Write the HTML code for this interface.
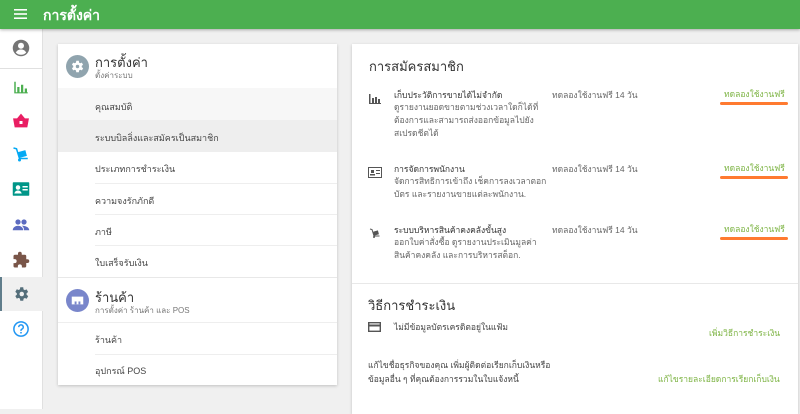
<!DOCTYPE html>
<html><head><meta charset="utf-8"><style>
*{margin:0;padding:0;box-sizing:border-box}
body{width:800px;height:409px;overflow:hidden;background:#f0f0f0;font-family:"Liberation Sans","Noto Sans CJK SC",sans-serif;color:#333;position:relative}
.hdr{position:absolute;left:0;top:0;width:800px;height:29px;background:#4caf50;box-shadow:0 1px 3px rgba(0,0,0,.3);z-index:2}
.hdr .t{position:absolute;left:43px;top:5px;color:#fff;font-size:14px;font-weight:bold}
.side{position:absolute;left:0;top:29px;width:43px;height:380px;background:#fff;border-right:1px solid #e0e0e0}
.ic{position:absolute;left:12px;width:18px;height:18px}
.card{position:absolute;background:#fff;box-shadow:0 1px 3px rgba(0,0,0,.2)}
.it{position:absolute;left:37px;font-size:9px;color:#444}
.sep{position:absolute;left:37px;right:0;height:1px;background:#eee}
.rt{font-size:8.5px;color:#444;position:absolute;white-space:nowrap}
.d{white-space:normal;line-height:13px;color:#666;width:160px}
.g{color:#7cb342}
.ob{position:absolute;width:68px;height:3px;background:#ff7a30;border-radius:2px}
</style></head><body>
<div class="hdr">
<svg style="position:absolute;left:14px;top:9px" width="13" height="10"><rect y="0" width="13" height="1.6" fill="#fff"/><rect y="4.2" width="13" height="1.6" fill="#fff"/><rect y="8.4" width="13" height="1.6" fill="#fff"/></svg>
<div class="t">การตั้งค่า</div></div>
<div class="side">
<svg class="ic" style="top:10px" viewBox="0 0 24 24"><circle cx="12" cy="12" r="11" fill="#757575"/><circle cx="12" cy="9" r="4" fill="#fff"/><path d="M5 18c2-3 4-4 7-4s5 1 7 4c-2 2-4 3-7 3s-5-1-7-3z" fill="#fff"/></svg>
<div style="position:absolute;left:0;top:39px;width:43px;height:1px;background:#e0e0e0"></div>
<svg class="ic" style="top:49px" viewBox="0 0 24 24"><path d="M3 5h2v15H3zM7 12h3v8H7zM12 9h3v11h-3zM17 14h3v6h-3zM3 19h18v1.5H3z" fill="#4caf50"/></svg>
<svg class="ic" style="top:83px" viewBox="0 0 24 24"><path d="M2 9h20l-2 11H4z M7 9l5-6 5 6" fill="#e91e63" stroke="#e91e63"/><rect x="10" y="12" width="4" height="4" fill="#fff"/></svg>
<svg class="ic" style="top:116px" viewBox="0 0 24 24"><path d="M2 4l4 1 4 13h11" stroke="#03a9f4" stroke-width="2" fill="none"/><rect x="9" y="8" width="10" height="8" fill="#03a9f4" transform="rotate(-15 14 12)"/><circle cx="10" cy="20" r="2" fill="#03a9f4"/></svg>
<svg class="ic" style="top:151px" viewBox="0 0 24 24"><rect x="1" y="3" width="22" height="18" rx="1" fill="#009688"/><circle cx="8" cy="10" r="3" fill="#fff"/><path d="M3 18c1-3 3-4 5-4s4 1 5 4z" fill="#fff"/><rect x="14" y="8" width="7" height="2" fill="#fff"/><rect x="14" y="12" width="7" height="2" fill="#fff"/></svg>
<svg class="ic" style="top:187px" viewBox="0 0 24 24"><circle cx="8" cy="8" r="3.5" fill="#5c6bc0"/><circle cx="16" cy="8" r="3.5" fill="#5c6bc0"/><path d="M1 19c0-4 4-6 7-6s7 2 7 6zM13 13c3 0 10 1 10 6h-7c0-3-1-5-3-6z" fill="#5c6bc0"/></svg>
<svg class="ic" style="top:222px" viewBox="0 0 24 24"><path d="M20.5 11H19V7a2 2 0 0 0-2-2h-4V3.5a2.5 2.5 0 0 0-5 0V5H4a2 2 0 0 0-2 2v3.8h1.5a2.7 2.7 0 0 1 0 5.4H2V20a2 2 0 0 0 2 2h3.8v-1.5a2.7 2.7 0 0 1 5.4 0V22H17a2 2 0 0 0 2-2v-4h1.5a2.5 2.5 0 0 0 0-5z" fill="#795548"/></svg>
<div style="position:absolute;left:0;top:248px;width:43px;height:34px;background:#f0f0f0;border-left:2px solid #607d8b"></div>
<svg class="ic" style="top:256px" viewBox="0 0 24 24"><path d="M19.4 13a7.5 7.5 0 0 0 0-2l2.1-1.6-2-3.5-2.5 1a7 7 0 0 0-1.7-1L15 3h-4l-.4 2.7a7 7 0 0 0-1.7 1l-2.5-1-2 3.5L6.5 11a7.5 7.5 0 0 0 0 2l-2.1 1.6 2 3.5 2.5-1a7 7 0 0 0 1.7 1L11 21h4l.4-2.7a7 7 0 0 0 1.7-1l2.5 1 2-3.5z" fill="#546e7a"/><circle cx="13" cy="12" r="3" fill="#f0f0f0"/></svg>
<svg class="ic" style="top:291px" viewBox="0 0 24 24"><circle cx="12" cy="12" r="9.5" stroke="#2196f3" stroke-width="2" fill="none"/><path d="M9 9.5a3 3 0 1 1 4 2.8c-1 .4-1 1-1 2.2" stroke="#2196f3" stroke-width="2" fill="none"/><circle cx="12" cy="17" r="1.2" fill="#2196f3"/></svg>
</div>

<div class="card" style="left:58px;top:44px;width:279px;height:341px">
<svg style="position:absolute;left:8px;top:11px" width="23" height="23" viewBox="0 0 24 24"><circle cx="12" cy="12" r="12" fill="#90a4ae"/><path d="M17 12.7a5 5 0 0 0 0-1.4l1.4-1.1-1.3-2.3-1.7.7a5 5 0 0 0-1.2-.7L14 6h-2.7l-.3 1.9a5 5 0 0 0-1.2.7l-1.7-.7-1.3 2.3 1.4 1.1a5 5 0 0 0 0 1.4l-1.4 1.1 1.3 2.3 1.7-.7a5 5 0 0 0 1.2.7l.3 1.9H14l.3-1.9a5 5 0 0 0 1.2-.7l1.7.7 1.3-2.3z" fill="#fff" transform="translate(-.6 0)"/><circle cx="12" cy="12" r="1.8" fill="#90a4ae"/></svg>
<div style="position:absolute;left:37px;top:8px;font-size:13px;color:#333">การตั้งค่า</div>
<div style="position:absolute;left:37px;top:25px;font-size:8px;color:#777">ตั้งค่าระบบ</div>
<div style="position:absolute;left:0;top:44px;width:279px;height:32px;background:#f7f7f7"></div>
<div style="position:absolute;left:0;top:76px;width:279px;height:32px;background:#eeeeee"></div>
<div class="it" style="top:56px">คุณสมบัติ</div>
<div class="it" style="top:87px">ระบบบิลลิ่งและสมัครเป็นสมาชิก</div>
<div class="it" style="top:118px">ประเภทการชำระเงิน</div>
<div class="sep" style="top:139px"></div>
<div class="it" style="top:150px">ความจงรักภักดี</div>
<div class="sep" style="top:170px"></div>
<div class="it" style="top:181px">ภาษี</div>
<div class="sep" style="top:201px"></div>
<div class="it" style="top:212px">ใบเสร็จรับเงิน</div>
<div style="position:absolute;left:0;top:233px;width:279px;height:1px;background:#e8e8e8"></div>
<svg style="position:absolute;left:8px;top:245px" width="23" height="23" viewBox="0 0 24 24"><circle cx="12" cy="12" r="12" fill="#7986cb"/><path d="M6 8h12v2H6zM6 10h12v6H6z" fill="#fff"/><rect x="9" y="13" width="2" height="3" fill="#7986cb"/><rect x="13" y="13" width="2" height="3" fill="#7986cb"/></svg>
<div style="position:absolute;left:37px;top:243px;font-size:13px;color:#333">ร้านค้า</div>
<div style="position:absolute;left:37px;top:260px;font-size:8px;color:#777">การตั้งค่า ร้านค้า และ POS</div>
<div style="position:absolute;left:0;top:278px;width:279px;height:1px;background:#eee"></div>
<div class="it" style="top:289px">ร้านค้า</div>
<div class="sep" style="top:310px"></div>
<div class="it" style="top:320px">อุปกรณ์ POS</div>
</div>

<div class="card" style="left:352px;top:44px;width:446px;height:370px">
<div style="position:absolute;left:17px;top:12px;font-size:13px;color:#333">การสมัครสมาชิก</div>
<svg style="position:absolute;left:17px;top:50px" width="12" height="10"><path d="M0 0h1.5v10H0zM3 4h2v6H3zM6 3h2v7H6zM9 5h2v5H9zM0 9h12v1H0z" fill="#555"/></svg>
<div class="rt" style="left:42px;top:44px;color:#333">เก็บประวัติการขายได้ไม่จำกัด</div>
<div class="rt d" style="left:42px;top:57px">ดูรายงานยอดขายตามช่วงเวลาใดก็ได้ที่ต้องการและสามารถส่งออกข้อมูลไปยังสเปรดชีตได้</div>
<div class="rt" style="left:200px;top:44px;color:#666">ทดลองใช้งานฟรี 14 วัน</div>
<div class="rt g" style="left:372px;top:43px">ทดลองใช้งานฟรี</div>
<div class="ob" style="left:368px;top:58px"></div>
<svg style="position:absolute;left:16px;top:123px" width="14" height="11"><rect x=".5" y=".5" width="13" height="10" fill="none" stroke="#555"/><rect x="3" y="3" width="3" height="3" fill="#555"/><rect x="2" y="7" width="5" height="1.5" fill="#555"/><rect x="8" y="3" width="4" height="1" fill="#555"/><rect x="8" y="6" width="4" height="1" fill="#555"/></svg>
<div class="rt" style="left:42px;top:118px;color:#333">การจัดการพนักงาน</div>
<div class="rt d" style="left:42px;top:131px">จัดการสิทธิการเข้าถึง เช็คการลงเวลาตอกบัตร และรายงานขายแต่ละพนักงาน.</div>
<div class="rt" style="left:200px;top:118px;color:#666">ทดลองใช้งานฟรี 14 วัน</div>
<div class="rt g" style="left:372px;top:117px">ทดลองใช้งานฟรี</div>
<div class="ob" style="left:368px;top:132px"></div>
<svg style="position:absolute;left:17px;top:183px" width="12" height="12" viewBox="0 0 24 24"><path d="M2 4l4 1 4 13h11" stroke="#555" stroke-width="2" fill="none"/><rect x="9" y="8" width="10" height="8" fill="#555" transform="rotate(-15 14 12)"/><circle cx="10" cy="20" r="2" fill="#555"/></svg>
<div class="rt" style="left:42px;top:179px;color:#333">ระบบบริหารสินค้าคงคลังขั้นสูง</div>
<div class="rt d" style="left:42px;top:192px">ออกใบค่าสั่งซื้อ ดูรายงานประเมินมูลค่าสินค้าคงคลัง และการบริหารสต็อก.</div>
<div class="rt" style="left:200px;top:179px;color:#666">ทดลองใช้งานฟรี 14 วัน</div>
<div class="rt g" style="left:372px;top:178px">ทดลองใช้งานฟรี</div>
<div class="ob" style="left:368px;top:193px"></div>
<div style="position:absolute;left:0;top:239px;width:446px;height:1px;background:#e8e8e8"></div>
<div style="position:absolute;left:16px;top:251px;font-size:13px;color:#333">วิธีการชำระเงิน</div>
<svg style="position:absolute;left:16px;top:278px" width="13" height="10"><rect x=".7" y=".7" width="11.6" height="8.6" fill="none" stroke="#555" stroke-width="1.4"/><rect x="0" y="2.5" width="13" height="2" fill="#555"/></svg>
<div class="rt" style="left:42px;top:276px;color:#444">ไม่มีข้อมูลบัตรเครดิตอยู่ในแฟ้ม</div>
<div class="rt g" style="left:357px;top:282px">เพิ่มวิธีการชำระเงิน</div>
<div class="rt" style="left:16px;top:314px;line-height:14px;color:#444">แก้ไขชื่อธุรกิจของคุณ เพิ่มผู้ติดต่อเรียกเก็บเงินหรือ<br>ข้อมูลอื่น ๆ ที่คุณต้องการรวมในใบแจ้งหนี้</div>
<div class="rt g" style="left:306px;top:328px">แก้ไขรายละเอียดการเรียกเก็บเงิน</div>
</div>
</body></html>
